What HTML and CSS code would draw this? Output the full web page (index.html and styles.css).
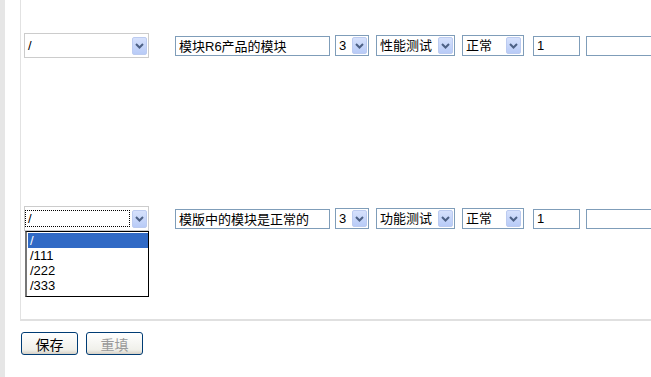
FILE: index.html
```html
<!DOCTYPE html>
<html lang="zh">
<head>
  <meta charset="UTF-8">
  <title>模块测试</title>
  <link rel="stylesheet" href="styles.css">
</head>
<body>
  <div id="page">
    <div class="strip"></div>
    <div id="main">
      <div class="panel">

        <div class="row first">
          <div class="combo wide">
            <span class="val">/</span>
            <span class="arrow"><svg width="9" height="6" viewBox="0 0 9 6"><path d="M1 1 L4.5 4.5 L8 1" fill="none" stroke="#4d6185" stroke-width="2"/></svg></span>
          </div>
          <input class="txt name" type="text" value="模块R6产品的模块">
          <div class="combo small">
            <span class="val">3</span>
            <span class="arrow"><svg width="9" height="6" viewBox="0 0 9 6"><path d="M1 1 L4.5 4.5 L8 1" fill="none" stroke="#4d6185" stroke-width="2"/></svg></span>
          </div>
          <div class="combo kind">
            <span class="val">性能测试</span>
            <span class="arrow"><svg width="9" height="6" viewBox="0 0 9 6"><path d="M1 1 L4.5 4.5 L8 1" fill="none" stroke="#4d6185" stroke-width="2"/></svg></span>
          </div>
          <div class="combo state">
            <span class="val">正常</span>
            <span class="arrow"><svg width="9" height="6" viewBox="0 0 9 6"><path d="M1 1 L4.5 4.5 L8 1" fill="none" stroke="#4d6185" stroke-width="2"/></svg></span>
          </div>
          <input class="txt num" type="text" value="1">
          <input class="txt last" type="text" value="">
        </div>

        <div class="row second">
          <div class="combo wide open">
            <span class="val focus">/</span>
            <span class="arrow"><svg width="9" height="6" viewBox="0 0 9 6"><path d="M1 1 L4.5 4.5 L8 1" fill="none" stroke="#4d6185" stroke-width="2"/></svg></span>
            <ul class="list">
              <li class="sel">/</li>
              <li>/111</li>
              <li>/222</li>
              <li>/333</li>
            </ul>
          </div>
          <input class="txt name" type="text" value="模版中的模块是正常的">
          <div class="combo small">
            <span class="val">3</span>
            <span class="arrow"><svg width="9" height="6" viewBox="0 0 9 6"><path d="M1 1 L4.5 4.5 L8 1" fill="none" stroke="#4d6185" stroke-width="2"/></svg></span>
          </div>
          <div class="combo kind">
            <span class="val">功能测试</span>
            <span class="arrow"><svg width="9" height="6" viewBox="0 0 9 6"><path d="M1 1 L4.5 4.5 L8 1" fill="none" stroke="#4d6185" stroke-width="2"/></svg></span>
          </div>
          <div class="combo state">
            <span class="val">正常</span>
            <span class="arrow"><svg width="9" height="6" viewBox="0 0 9 6"><path d="M1 1 L4.5 4.5 L8 1" fill="none" stroke="#4d6185" stroke-width="2"/></svg></span>
          </div>
          <input class="txt num" type="text" value="1">
          <input class="txt last" type="text" value="">
        </div>

      </div>
      <div class="buttons">
        <button type="button" class="btn">保存</button>
        <button type="button" class="btn off">重填</button>
      </div>
    </div>
  </div>
</body>
</html>
```

FILE: styles.css
```css
body {
  margin: 0;
  padding: 0;
  background: #fff;
  font-family: 'Liberation Sans', 'Noto Sans CJK SC', sans-serif;
  font-size: 13px;
  color: #000;
  overflow: hidden;
}

#page {
  display: flex;
  height: 377px;
}

.strip {
  width: 5px;
  background-color: #e6e6e6;
}

#main {
  flex: 1;
  padding-left: 15px;
  overflow: hidden;
}

.panel {
  height: 321px;
  box-sizing: border-box;
  border-left: 1px solid #e2e2e2;
  border-bottom: 2px solid #e0e0e0;
}

.row {
  display: flex;
  align-items: center;
  padding-left: 3px;
  white-space: nowrap;
}

.row.first {
  padding-top: 33px;
}

.row.second {
  padding-top: 148px;
}

.combo {
  position: relative;
  display: flex;
  align-items: center;
  justify-content: space-between;
  box-sizing: border-box;
  height: 21px;
  border: 1px solid #7f9db9;
  background: #fff;
  flex-shrink: 0;
}

.combo .val {
  padding-left: 3px;
  line-height: 15px;
}

.combo .arrow {
  display: flex;
  align-items: center;
  justify-content: center;
  width: 15px;
  height: 17px;
  margin-right: 1px;
  box-sizing: border-box;
  border: 1px solid #bccbf0;
  border-radius: 2px;
  background: linear-gradient(#d6e1fc, #b8cbf7);
}

.combo.wide {
  width: 125px;
  height: 25px;
  border-color: #cccccc;
}

.combo.wide .arrow {
  height: 18px;
}

.combo.small {
  width: 34px;
  margin-left: 5px;
}

.combo.kind {
  width: 79px;
  margin-left: 7px;
}

.combo.state {
  width: 62px;
  margin-left: 7px;
}

.combo.state .arrow {
  margin-right: 2px;
}

.val.focus {
  margin-left: 1px;
  width: 101px;
  padding-left: 2px;
  outline: 1px dotted #000;
}

.txt {
  box-sizing: border-box;
  height: 20px;
  margin: 0;
  padding: 0 3px;
  border: 1px solid #7f9db9;
  font-family: 'Liberation Sans', 'Noto Sans CJK SC', sans-serif;
  font-size: 13px;
  color: #000;
  flex-shrink: 0;
}

.txt.name {
  width: 155px;
  margin-left: 26px;
}

.txt.num {
  width: 47px;
  margin-left: 9px;
}

.txt.last {
  width: 100px;
  margin-left: 6px;
}

.list {
  position: absolute;
  top: 24px;
  left: 0;
  width: 124px;
  margin: 0;
  padding: 1px 0 3px 1px;
  list-style: none;
  box-sizing: border-box;
  border: 1px solid #000;
  border-left: 2px solid #777;
  background: #fff;
  z-index: 2;
}

.list li {
  height: 15px;
  line-height: 15px;
  padding-left: 2px;
}

.list li.sel {
  background-color: #316ac5;
  color: #fff;
}

.buttons {
  display: flex;
  gap: 8px;
  padding: 11px 0 0 1px;
}

.btn {
  width: 57px;
  height: 23px;
  padding: 0;
  border: 1px solid #003c74;
  border-radius: 3px;
  background: linear-gradient(#ffffff, #f0f0ea 80%, #d6d0c5);
  font-family: 'Noto Sans CJK SC', sans-serif;
  font-size: 14px;
  color: #000;
}

.btn.off {
  color: #9a9a9a;
}
```
